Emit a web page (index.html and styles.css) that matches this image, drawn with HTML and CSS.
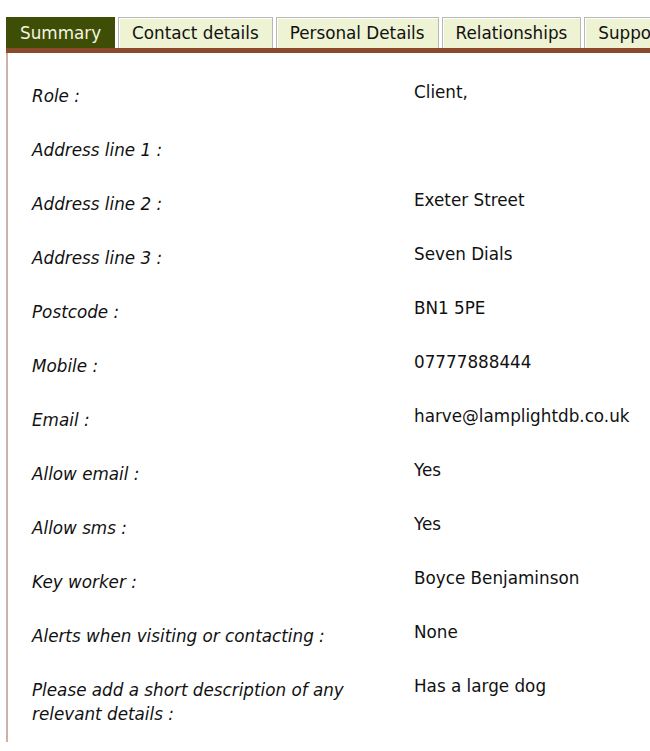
FILE: index.html
```html
<!DOCTYPE html>
<html>
<head>
<meta charset="utf-8">
<link rel="stylesheet" href="styles.css">
</head>
<body>
<div class="wrap">
  <ul class="tabs">
    <li class="tab active">Summary</li>
    <li class="tab">Contact details</li>
    <li class="tab">Personal Details</li>
    <li class="tab">Relationships</li>
    <li class="tab">Support</li>
  </ul>
  <div class="panel">
    <div class="row"><div class="label">Role :</div><div class="value">Client,</div></div>
    <div class="row"><div class="label">Address line 1 :</div><div class="value"></div></div>
    <div class="row"><div class="label">Address line 2 :</div><div class="value">Exeter Street</div></div>
    <div class="row"><div class="label">Address line 3 :</div><div class="value">Seven Dials</div></div>
    <div class="row"><div class="label">Postcode :</div><div class="value">BN1 5PE</div></div>
    <div class="row"><div class="label">Mobile :</div><div class="value">07777888444</div></div>
    <div class="row"><div class="label">Email :</div><div class="value">harve@lamplightdb.co.uk</div></div>
    <div class="row"><div class="label">Allow email :</div><div class="value">Yes</div></div>
    <div class="row"><div class="label">Allow sms :</div><div class="value">Yes</div></div>
    <div class="row"><div class="label">Key worker :</div><div class="value">Boyce Benjaminson</div></div>
    <div class="row"><div class="label">Alerts when visiting or contacting :</div><div class="value">None</div></div>
    <div class="row"><div class="label">Please add a short description of any relevant details :</div><div class="value">Has a large dog</div></div>
  </div>
</div>
</body>
</html>
```
FILE: styles.css
```css
html, body {
  margin: 0;
  padding: 0;
  background: #ffffff;
}
body {
  font-family: "DejaVu Sans", Verdana, sans-serif;
  font-size: 16.8px;
  color: #111111;
  overflow: hidden;
}
.wrap {
  padding: 17px 0 0 6px;
  width: 900px;
}
.tabs {
  list-style: none;
  margin: 0;
  padding: 0;
  display: flex;
  gap: 3px;
  border-bottom: 5px solid #8b4a2c;
}
.tab {
  height: 30px;
  line-height: 31px;
  padding: 0 13px;
  background: #eef3d4;
  border: 1px solid #b8b8b8;
  border-bottom: none;
  box-shadow: inset 1px 1px 0 #ffffff;
  white-space: nowrap;
  color: #111;
}
.tab.active {
  background: #3f4e06;
  color: #f4f4e0;
  border-color: #3f4e06;
  box-shadow: none;
}
.panel {
  border-left: 2px solid #cdb2a8;
  padding: 27px 0 16px 24px;
}
.row {
  display: grid;
  grid-template-columns: 382px 1fr;
  line-height: 24px;
  margin-bottom: 26px;
}
.row:last-child { margin-bottom: 0; }
.label {
  font-style: italic;
  padding-top: 4px;
  padding-right: 20px;
}
.value {
  padding-top: 0;
}
```
